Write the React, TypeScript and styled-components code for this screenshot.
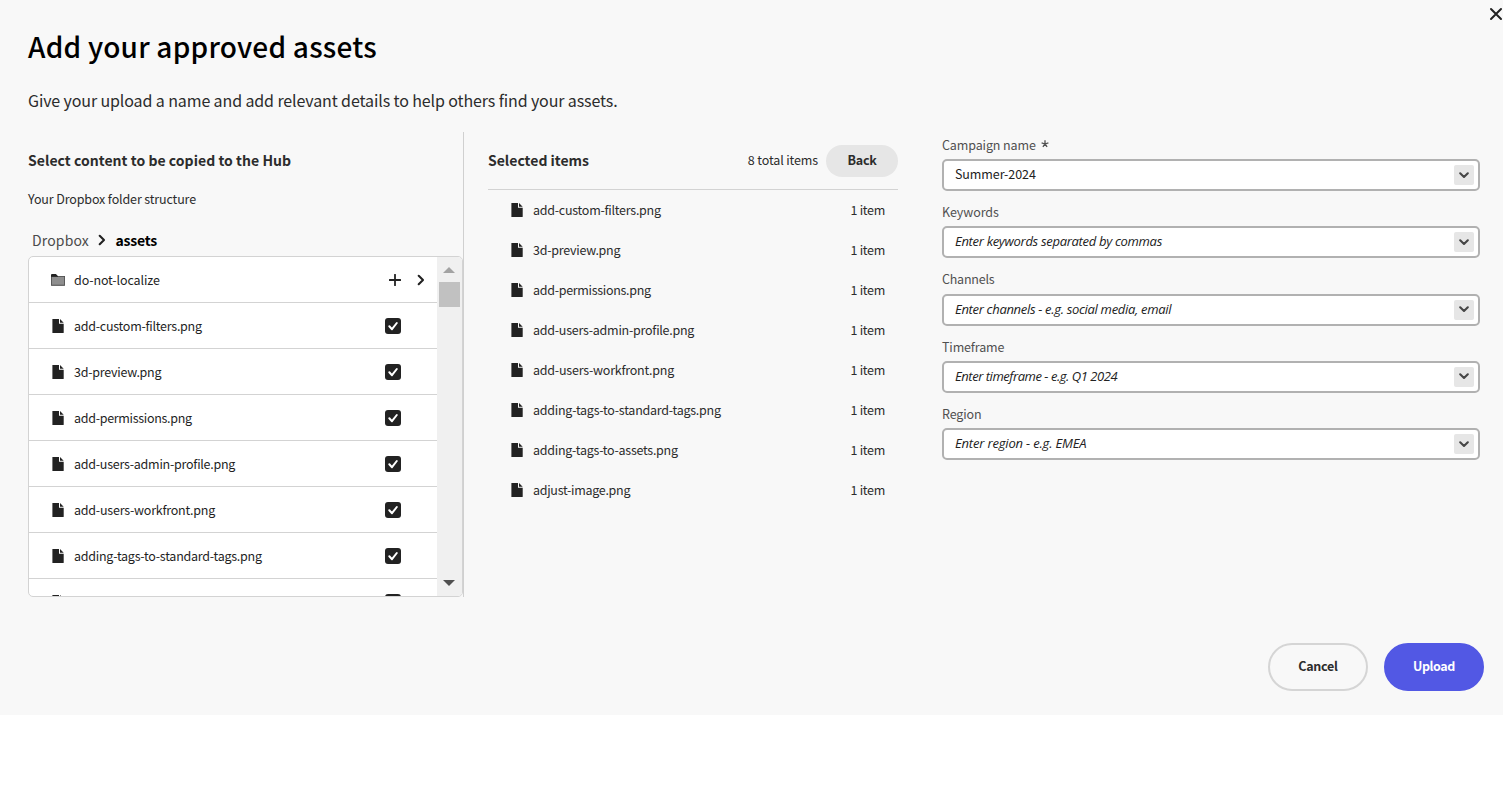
import React from 'react';
import styled, { createGlobalStyle } from 'styled-components';

const GlobalStyle = createGlobalStyle`
  * { box-sizing: border-box; }
  body {
    margin: 0;
    background: #fff;
    color: #2c2c2c;
    font-family: "Noto Sans CJK SC", "Noto Sans", sans-serif;
    font-size: 12.5px;
    line-height: 20px;
  }
  h1, h2, p { margin: 0; }
  button { font-family: inherit; padding: 0; cursor: pointer; }
`;

const Dialog = styled.main`
  position: relative;
  width: 1503px;
  height: 715px;
  padding: 26px 19px 24px 28px;
  background: #f8f8f8;
  display: flex;
  flex-direction: column;
`;

const CloseButton = styled.button`
  position: absolute;
  top: 7px;
  right: 0;
  width: 14px;
  height: 14px;
  border: 0;
  background: none;
  svg { display: block; }
`;

const Title = styled.h1`
  font-size: 28px;
  font-weight: 500;
  line-height: 40px;
  letter-spacing: 0.22px;
  color: #000;
`;

const Subtitle = styled.p`
  margin-top: 22px;
  font-size: 16px;
  line-height: 24px;
  letter-spacing: -0.115px;
`;

const Columns = styled.div`
  display: flex;
  align-items: flex-start;
  margin-top: 20px;
`;

const SourceColumn = styled.section`
  width: 436px;
  height: 465px;
  padding-top: 18px;
  border-right: 1px solid #d0d0d0;
`;

const SectionTitle = styled.h2<{ $spacing?: number }>`
  font-size: 14px;
  font-weight: 700;
  line-height: 20px;
  letter-spacing: ${p => p.$spacing ?? 0}px;
`;

const SourceHint = styled.p`
  margin-top: 19px;
  letter-spacing: -0.134px;
`;

const Breadcrumb = styled.nav`
  display: flex;
  align-items: center;
  margin: 21px 0 6px;
  padding-left: 4px;
  font-size: 14px;
  svg { margin: 0 9.5px 0 9px; }
`;

const CrumbLink = styled.span`
  color: #4b4b4b;
  letter-spacing: 0.15px;
`;

const CrumbCurrent = styled.strong`
  color: #000;
  letter-spacing: -0.2px;
`;

const Browser = styled.div`
  display: flex;
  height: 341px;
  border: 1px solid #d3d3d3;
  border-radius: 5px;
  overflow: hidden;
  background: #fff;
`;

const BrowserList = styled.div`
  flex: 1;
  overflow: hidden;
`;

const BrowserRow = styled.div`
  display: flex;
  align-items: center;
  height: 46px;
  padding: 0 10px 0 22px;
  border-bottom: 1px solid #d3d3d3;
  color: #1f1f1f;
`;

const FileIconSlot = styled.span`
  display: flex;
  width: 23px;
  flex: none;
  svg { display: block; }
`;

const FileName = styled.span<{ $spacing: number }>`
  flex: 1;
  letter-spacing: ${p => p.$spacing}px;
  white-space: nowrap;
`;

const RowActions = styled.span`
  display: flex;
  align-items: center;
  gap: 16px;
  margin-right: 2px;
`;

const Checkbox = styled.span`
  width: 16px;
  height: 16px;
  margin-right: 26px;
  border-radius: 3px;
  background: #222;
  svg { display: block; }
`;

const Scrollbar = styled.div`
  display: flex;
  flex-direction: column;
  align-items: center;
  width: 25px;
  padding: 10px 0;
  background: #f0f0f0;
  svg { display: block; flex: none; margin-right: 1px; }
`;

const ScrollThumb = styled.div`
  width: 21px;
  height: 25px;
  margin: 9px 0 auto;
  background: #c1c1c1;
`;

const SelectedColumn = styled.section`
  width: 410px;
  margin-left: 24px;
  padding-top: 13px;
`;

const SelectedHeader = styled.header`
  display: flex;
  align-items: flex-start;
  height: 45px;
  border-bottom: 1px solid #d3d3d3;
  h2 { margin-top: 5px; }
`;

const TotalCount = styled.span`
  margin: 5px 8px 0 auto;
  letter-spacing: -0.12px;
`;

const BackButton = styled.button`
  width: 72px;
  height: 32px;
  padding-bottom: 2px;
  border: 0;
  border-radius: 16px;
  background: #e6e6e6;
  color: #2c2c2c;
  font-size: 12.5px;
  font-weight: 700;
  line-height: 20px;
  letter-spacing: -0.26px;
`;

const SelectedRow = styled.div`
  display: flex;
  align-items: center;
  height: 40px;
  padding: 0 13px 0 22px;
`;

const ItemCount = styled.span`
  letter-spacing: -0.28px;
`;

const DetailsForm = styled.form`
  width: 538px;
  margin-left: 44px;
  padding-top: 2.85px;
`;

const Field = styled.div`
  height: 67.25px;
`;

const Label = styled.label<{ $spacing: number }>`
  display: flex;
  height: 24.2px;
  color: #505050;
  letter-spacing: ${p => p.$spacing}px;
`;

const Required = styled.svg`
  margin: 5px 0 0 5px;
`;

const Combo = styled.div`
  display: flex;
  align-items: center;
  justify-content: space-between;
  height: 32px;
  padding: 0 4px 0 11px;
  border: 2px solid #b1b1b1;
  border-radius: 5px;
  background: #fff;
`;

const ComboValue = styled.span<{ $spacing: number; $placeholder: boolean }>`
  padding-bottom: 2px;
  color: #222;
  font-family: ${p => (p.$placeholder ? '"Open Sans", "Noto Sans", sans-serif' : 'inherit')};
  font-style: ${p => (p.$placeholder ? 'italic' : 'normal')};
  font-size: ${p => (p.$placeholder ? 13 : 12.5)}px;
  letter-spacing: ${p => p.$spacing}px;
  white-space: nowrap;
`;

const ComboButton = styled.span`
  display: flex;
  align-items: center;
  justify-content: center;
  width: 20px;
  height: 20px;
  border-radius: 2px;
  background: #e6e6e6;
`;

const Footer = styled.footer`
  display: flex;
  justify-content: flex-end;
  gap: 16px;
  margin-top: auto;
`;

const FooterButton = styled.button<{ $primary?: boolean }>`
  width: 100px;
  height: 48px;
  padding-bottom: 2px;
  border: 2px solid ${p => (p.$primary ? '#5258e4' : '#d5d5d5')};
  border-radius: 24px;
  background: ${p => (p.$primary ? '#5258e4' : 'transparent')};
  color: ${p => (p.$primary ? '#fff' : '#2c2c2c')};
  font-size: 12.5px;
  font-weight: 700;
  line-height: 20px;
  letter-spacing: ${p => (p.$primary ? -0.4 : -0.25)}px;
`;

const DocumentIcon = () => (
  <svg width="14" height="14" viewBox="0 0 14 14">
    <path d="M1.4 0H8v4.7h4.7V13.4a.6.6 0 0 1-.6.6H1.4z" fill="#222" />
    <path d="M9 0l3.7 3.7H9z" fill="#222" />
  </svg>
);

const FolderIcon = () => (
  <svg width="14" height="14" viewBox="0 0 14 14">
    <path d="M0 3V2q0-1 1-1h4l1.6 2H14v9.5H0z" fill="#222" />
    <path d="M.5 3.5h13v8.7H.5z" fill="#8e8e8e" stroke="#5a5a5a" />
    <path d="M0 3.3h7" stroke="#222" />
  </svg>
);

const ChevronRight = () => (
  <svg width="8" height="12" viewBox="0 0 8 12" fill="none">
    <path d="M1.7 1.8L6 6L1.7 10.2" stroke="#222" strokeWidth="2.1" strokeLinecap="round" strokeLinejoin="round" />
  </svg>
);

const PlusIcon = () => (
  <svg width="12" height="12" viewBox="0 0 12 12">
    <path d="M6 .7v10.6M.7 6h10.6" stroke="#222" strokeWidth="1.8" strokeLinecap="round" />
  </svg>
);

type Item = { name: string; spacing: number };

const files: Item[] = [
  { name: 'add-custom-filters.png', spacing: -0.26 },
  { name: '3d-preview.png', spacing: -0.25 },
  { name: 'add-permissions.png', spacing: -0.3 },
  { name: 'add-users-admin-profile.png', spacing: -0.255 },
  { name: 'add-users-workfront.png', spacing: -0.23 },
  { name: 'adding-tags-to-standard-tags.png', spacing: -0.25 },
  { name: 'adding-tags-to-assets.png', spacing: -0.27 },
  { name: 'adjust-image.png', spacing: -0.29 },
];

const fields = [
  { label: 'Campaign name', labelSpacing: -0.12, text: 'Summer-2024', spacing: -0.09, filled: true },
  { label: 'Keywords', labelSpacing: -0.08, text: 'Enter keywords separated by commas', spacing: -0.305 },
  { label: 'Channels', labelSpacing: -0.22, text: 'Enter channels - e.g. social media, email', spacing: -0.31 },
  { label: 'Timeframe', labelSpacing: -0.14, text: 'Enter timeframe - e.g. Q1 2024', spacing: -0.45 },
  { label: 'Region', labelSpacing: -0.14, text: 'Enter region - e.g. EMEA', spacing: -0.17 },
];

export default function App() {
  return (
    <>
      <GlobalStyle />
      <Dialog>
        <CloseButton aria-label="Close">
          <svg width="14" height="14" viewBox="0 0 14 14">
            <path d="M2 2l10 10M12 2L2 12" stroke="#222" strokeWidth="2" strokeLinecap="round" />
          </svg>
        </CloseButton>
        <Title>Add your approved assets</Title>
        <Subtitle>Give your upload a name and add relevant details to help others find your assets.</Subtitle>
        <Columns>
          <SourceColumn>
            <SectionTitle $spacing={0.035}>Select content to be copied to the Hub</SectionTitle>
            <SourceHint>Your Dropbox folder structure</SourceHint>
            <Breadcrumb>
              <CrumbLink>Dropbox</CrumbLink>
              <ChevronRight />
              <CrumbCurrent>assets</CrumbCurrent>
            </Breadcrumb>
            <Browser>
              <BrowserList>
                <BrowserRow>
                  <FileIconSlot><FolderIcon /></FileIconSlot>
                  <FileName $spacing={-0.12}>do-not-localize</FileName>
                  <RowActions>
                    <PlusIcon />
                    <ChevronRight />
                  </RowActions>
                </BrowserRow>
                {files.slice(0, 7).map(file => (
                  <BrowserRow key={file.name}>
                    <FileIconSlot><DocumentIcon /></FileIconSlot>
                    <FileName $spacing={file.spacing}>{file.name}</FileName>
                    <Checkbox>
                      <svg width="16" height="16" viewBox="0 0 16 16" fill="none">
                        <path d="M4.3 8.3L7 11.2L11.8 5" stroke="#fff" strokeWidth="2" strokeLinecap="round" strokeLinejoin="round" />
                      </svg>
                    </Checkbox>
                  </BrowserRow>
                ))}
              </BrowserList>
              <Scrollbar>
                <svg width="12" height="6" viewBox="0 0 12 6"><path d="M0 6l6-6 6 6z" fill="#a3a3a3" /></svg>
                <ScrollThumb />
                <svg width="12" height="6" viewBox="0 0 12 6"><path d="M0 0h12L6 6z" fill="#505050" /></svg>
              </Scrollbar>
            </Browser>
          </SourceColumn>

          <SelectedColumn>
            <SelectedHeader>
              <SectionTitle>Selected items</SectionTitle>
              <TotalCount>8 total items</TotalCount>
              <BackButton>Back</BackButton>
            </SelectedHeader>
            {files.map(file => (
              <SelectedRow key={file.name}>
                <FileIconSlot><DocumentIcon /></FileIconSlot>
                <FileName $spacing={file.spacing}>{file.name}</FileName>
                <ItemCount>1 item</ItemCount>
              </SelectedRow>
            ))}
          </SelectedColumn>

          <DetailsForm>
            {fields.map(field => (
              <Field key={field.label}>
                <Label $spacing={field.labelSpacing}>
                  {field.label}
                  {field.filled && (
                    <Required width="8" height="8" viewBox="0 0 8 8">
                      <path d="M4 .3V4M4 4L.6 2.9M4 4l3.4-1.1M4 4L1.9 6.9M4 4l2.1 2.9" stroke="#505050" strokeWidth="1.3" />
                    </Required>
                  )}
                </Label>
                <Combo>
                  <ComboValue $spacing={field.spacing} $placeholder={!field.filled}>{field.text}</ComboValue>
                  <ComboButton>
                    <svg width="10" height="7" viewBox="0 0 10 7" fill="none">
                      <path d="M1.2 1.3L5 5L8.8 1.3" stroke="#464646" strokeWidth="2.1" strokeLinecap="round" strokeLinejoin="round" />
                    </svg>
                  </ComboButton>
                </Combo>
              </Field>
            ))}
          </DetailsForm>
        </Columns>
        <Footer>
          <FooterButton>Cancel</FooterButton>
          <FooterButton $primary>Upload</FooterButton>
        </Footer>
      </Dialog>
    </>
  );
}
